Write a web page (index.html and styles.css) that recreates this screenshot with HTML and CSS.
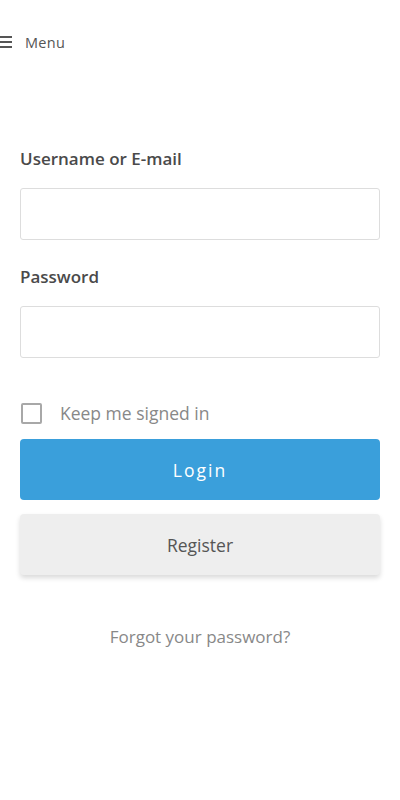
FILE: index.html
```html
<!DOCTYPE html>
<html>
<head>
<meta charset="utf-8">
<link rel="stylesheet" href="styles.css">
</head>
<body>
<header class="topbar">
  <span class="burger"><span></span><span></span><span></span></span>
  <span class="menu-label">Menu</span>
</header>
<form class="login">
  <label class="field-label">Username or E-mail</label>
  <input class="field" type="text">
  <label class="field-label">Password</label>
  <input class="field" type="password">
  <label class="remember"><span class="box"></span><span>Keep me signed in</span></label>
  <button type="button" class="btn btn-primary">Login</button>
  <button type="button" class="btn btn-secondary">Register</button>
  <a class="forgot">Forgot your password?</a>
</form>
</body>
</html>
```
FILE: styles.css
```css
* { box-sizing: border-box; }
html, body { margin: 0; padding: 0; background: #fff; }
body { font-family: "Open Sans", sans-serif; color: #444; width: 400px; }
.topbar { display: flex; align-items: center; height: 84px; }
.burger { display: flex; flex-direction: column; justify-content: space-between; width: 12px; height: 12px; margin-right: 13px; }
.burger span { display: block; height: 2px; background: #555; }
.menu-label { font-size: 14.5px; color: #555; letter-spacing: 0.3px; }
.login { display: flex; flex-direction: column; padding: 62px 20px 0 20px; }
.field-label { font-size: 17px; font-weight: 600; color: #4a4a4a; line-height: 26px; margin-bottom: 16px; }
.field { height: 52px; border: 1px solid #ddd; border-radius: 3px; margin-bottom: 24px; font-size: 16px; }
.remember { display: flex; align-items: center; height: 30px; margin-top: 16px; font-size: 17.5px; color: #888; margin-bottom: 11px; }
.remember .box { width: 21px; height: 21px; border: 2px solid #a8a8a8; border-radius: 2px; margin-left: 1px; margin-right: 18px; }
.btn { height: 61px; border: none; border-radius: 4px; font-family: "Open Sans", sans-serif; font-size: 17.5px; }
.btn-primary { background: #3a9fdb; color: #fff; letter-spacing: 2px; }
.btn-secondary { margin-top: 14px; background: #eee; color: #555; box-shadow: 0 3px 5px rgba(0,0,0,0.15); }
.forgot { text-align: center; margin-top: 50px; font-size: 17px; color: #888; line-height: 23px; }
```
